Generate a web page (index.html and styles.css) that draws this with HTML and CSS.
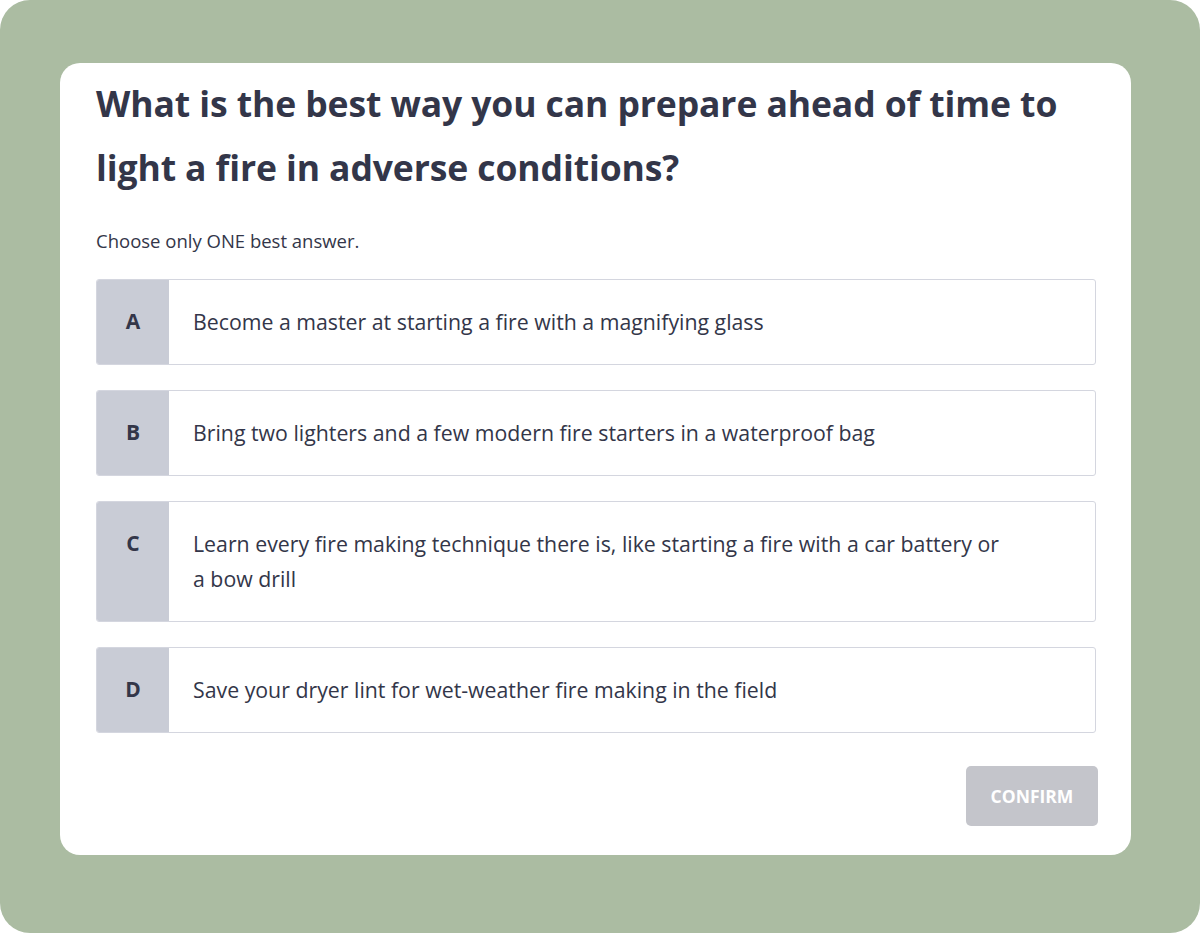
FILE: index.html
```html
<!DOCTYPE html>
<html>
<head>
<meta charset="utf-8">
<link rel="stylesheet" href="styles.css">
</head>
<body>
<div class="frame">
  <div class="card">
    <h1 class="question">What is the best way you can prepare ahead of time to light a fire in adverse conditions?</h1>
    <p class="hint">Choose only ONE best answer.</p>
    <div class="options">
      <div class="option"><div class="letter">A</div><div class="answer">Become a master at starting a fire with a magnifying glass</div></div>
      <div class="option"><div class="letter">B</div><div class="answer">Bring two lighters and a few modern fire starters in a waterproof bag</div></div>
      <div class="option"><div class="letter">C</div><div class="answer">Learn every fire making technique there is, like starting a fire with a car battery or a bow drill</div></div>
      <div class="option"><div class="letter">D</div><div class="answer">Save your dryer lint for wet-weather fire making in the field</div></div>
    </div>
    <div class="actions"><button class="confirm">CONFIRM</button></div>
  </div>
</div>
</body>
</html>
```
FILE: styles.css
```css
* { box-sizing: border-box; }
html, body { margin: 0; padding: 0; background: #ffffff; }
body { font-family: "Open Sans", "Liberation Sans", sans-serif; color: #333649; font-variant-ligatures: none; }
.frame {
  width: 1200px;
  height: 933px;
  background: #abbca2;
  border-radius: 30px;
  padding: 63px 69px 0 60px;
}
.card {
  background: #ffffff;
  border-radius: 20px;
  padding: 8px 35px 29px 36px;
  height: 792px;
}
.question {
  margin: 0;
  font-size: 35.5px;
  font-weight: 700;
  line-height: 64px;
  width: 1000px;
  letter-spacing: -0.1px;
  color: #333649;
}
.hint {
  margin: 30px 0 0;
  font-size: 18.5px;
  line-height: 24px;
}
.options {
  margin-top: 26px;
  display: flex;
  flex-direction: column;
  gap: 25px;
  width: 1000px;
}
.option {
  display: flex;
  border: 1px solid #d4d6df;
  border-radius: 3px;
  min-height: 86px;
  overflow: hidden;
}
.letter {
  width: 72px;
  flex: none;
  background: #c9ccd6;
  font-weight: 700;
  font-size: 21px;
  line-height: 35px;
  text-align: center;
  padding-top: 24px;
}
.answer {
  padding: 24px 90px 25px 24px;
  font-size: 21.3px;
  line-height: 35px;
  color: #333649;
}
.actions {
  display: flex;
  justify-content: flex-end;
  margin-top: 33px;
  margin-right: -2px;
}
.confirm {
  font-family: inherit;
  width: 132px;
  height: 60px;
  border: none;
  border-radius: 5px;
  background: #c4c5cb;
  color: #ffffff;
  font-size: 17.5px;
  font-weight: 700;
}
```
